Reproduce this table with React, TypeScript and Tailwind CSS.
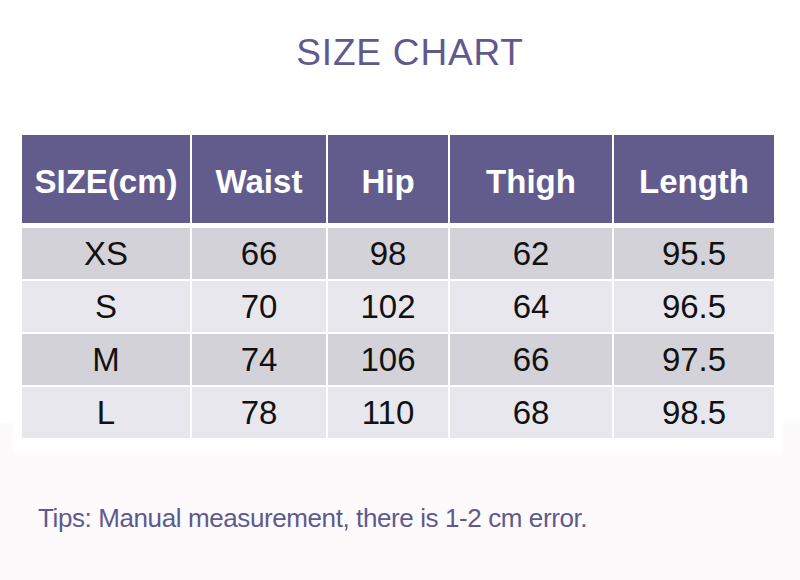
const headers = ["SIZE(cm)", "Waist", "Hip", "Thigh", "Length"];

const rows = [
  ["XS", "66", "98", "62", "95.5"],
  ["S", "70", "102", "64", "96.5"],
  ["M", "74", "106", "66", "97.5"],
  ["L", "78", "110", "68", "98.5"],
];

const cols = "grid grid-cols-[168px_134px_120px_162px_160px] gap-x-[2px]";

export default function App() {
  return (
    <div className="w-[800px] h-[580px] bg-[#fcfafb] font-[family-name:Liberation_Sans,Arial,sans-serif] overflow-hidden">
      <div className="h-[423px] bg-white">
        <h1 className="pt-[31px] pl-[20px] text-center text-[37px] leading-[44px] tracking-[0.8px] text-[#5f5a8d]">
          SIZE CHART
        </h1>
        <div className="mt-[60px] ml-[13px] w-[770px] bg-white pl-[9px] pt-0 pb-[14px]">
          <div className={`${cols} h-[88px]`}>
            {headers.map((h) => (
              <div
                key={h}
                className="flex items-center justify-center pt-[4px] bg-[#625c8d] text-white font-bold text-[33px] leading-none"
              >
                {h}
              </div>
            ))}
          </div>
          <div className="mt-[5px] flex flex-col gap-y-[2px]">
            {rows.map((r, i) => (
              <div key={r[0]} className={`${cols} h-[51px]`}>
                {r.map((c, j) => (
                  <div
                    key={j}
                    className={`flex items-center justify-center text-[33px] leading-none text-[#111] ${
                      i % 2 === 0 ? "bg-[#d3d2d9]" : "bg-[#e8e7ed]"
                    }`}
                  >
                    {c}
                  </div>
                ))}
              </div>
            ))}
          </div>
        </div>
      </div>
      <p className="mt-[80px] pl-[38px] text-[26px] leading-[30px] tracking-[-0.4px] text-[#5f5a8d]">
        Tips: Manual measurement, there is 1-2 cm error.
      </p>
    </div>
  );
}
